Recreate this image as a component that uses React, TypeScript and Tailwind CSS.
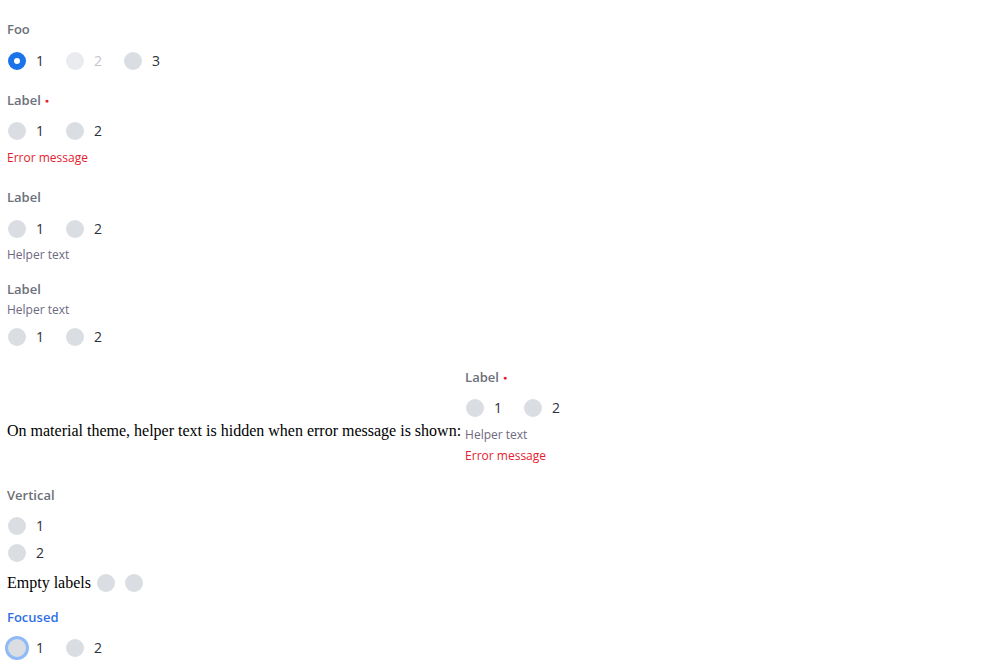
import React from 'react';

const sans = { fontFamily: '"Open Sans", "Noto Sans", Arial, sans-serif' };

type Item = { label: string; checked?: boolean; disabled?: boolean; focused?: boolean };

function Radio({ item }: { item: Item }) {
  let circle = 'w-[18px] h-[18px] rounded-full shrink-0 bg-[#dadde2]';
  if (item.checked) circle = 'w-[18px] h-[18px] rounded-full shrink-0 bg-white border-[6px] border-[#1a73e8]';
  if (item.disabled) circle = 'w-[18px] h-[18px] rounded-full shrink-0 bg-[#e9ebef]';
  if (item.focused) circle = 'w-[18px] h-[18px] rounded-full shrink-0 bg-[#dadde2] ring-[3px] ring-[#90b9f7]';
  return (
    <div className="flex items-center">
      <span className={circle} />
      {item.label && (
        <span className={`ml-[10px] text-[14px] leading-[24px] ${item.disabled ? 'text-[#c3c6cc]' : 'text-[#2c313a]'}`}>
          {item.label}
        </span>
      )}
    </div>
  );
}

function Label({ text, required, focused }: { text: string; required?: boolean; focused?: boolean }) {
  return (
    <div className={`h-[20px] leading-[20px] text-[13px] font-semibold ${focused ? 'text-[#2f6fe6]' : 'text-[#6c7079]'}`}>
      {text}
      {required && <span className="ml-[4px] text-[7px] text-[#e5202e] relative top-[-2px]">●</span>}
    </div>
  );
}

function Row({ items, className = '' }: { items: Item[]; className?: string }) {
  return (
    <div className={`flex items-center gap-[22px] h-[24px] pl-[1px] ${className}`}>
      {items.map((it, i) => (
        <Radio key={i} item={it} />
      ))}
    </div>
  );
}

const Helper = ({ className = '' }: { className?: string }) => (
  <div className={`h-[16px] leading-[16px] text-[12px] text-[#6d6a80] ${className}`}>Helper text</div>
);
const ErrorMsg = ({ className = '' }: { className?: string }) => (
  <div className={`h-[16px] leading-[16px] text-[12px] text-[#e5202e] ${className}`}>Error message</div>
);

const two: Item[] = [{ label: '1' }, { label: '2' }];

export default function App() {
  return (
    <div className="min-h-screen bg-white px-[7px] pt-[19px]" style={sans}>
      <div>
        <Label text="Foo" />
        <Row className="mt-[10px]" items={[{ label: '1', checked: true }, { label: '2', disabled: true }, { label: '3' }]} />
      </div>

      <div className="mt-[17px]">
        <Label text="Label" required />
        <Row className="mt-[9px]" items={two} />
        <ErrorMsg className="mt-[7px]" />
      </div>

      <div className="mt-[21px]">
        <Label text="Label" />
        <Row className="mt-[10px]" items={two} />
        <Helper className="mt-[6px]" />
      </div>

      <div className="mt-[16px]">
        <Label text="Label" />
        <Helper className="mt-[3px]" />
        <Row className="mt-[7px]" items={two} />
      </div>

      <div className="mt-[18px] flex items-start">
        <span className="mt-[52px] text-[16px] leading-[24px] text-black" style={{ fontFamily: '"Liberation Serif", serif' }}>
          On material theme, helper text is hidden when error message is shown:
        </span>
        <div className="ml-[4px]">
          <Label text="Label" required />
          <Row className="mt-[9px]" items={two} />
          <Helper className="mt-[7px]" />
          <ErrorMsg className="mt-[5px]" />
        </div>
      </div>

      <div className="mt-[21px]">
        <Label text="Vertical" />
        <div className="mt-[9px] flex flex-col gap-[3px] pl-[1px]">
          <div className="h-[24px] flex items-center"><Radio item={{ label: '1' }} /></div>
          <div className="h-[24px] flex items-center"><Radio item={{ label: '2' }} /></div>
        </div>
      </div>

      <div className="mt-[6px] h-[24px] flex items-center">
        <span className="text-[16px] leading-[24px] text-black" style={{ fontFamily: '"Liberation Serif", serif' }}>
          Empty labels
        </span>
        <div className="ml-[6px] flex items-center gap-[10px]">
          <Radio item={{ label: '' }} />
          <Radio item={{ label: '' }} />
        </div>
      </div>

      <div className="mt-[12px] pb-4">
        <Label text="Focused" focused />
        <Row className="mt-[9px]" items={[{ label: '1', focused: true }, { label: '2' }]} />
      </div>
    </div>
  );
}
